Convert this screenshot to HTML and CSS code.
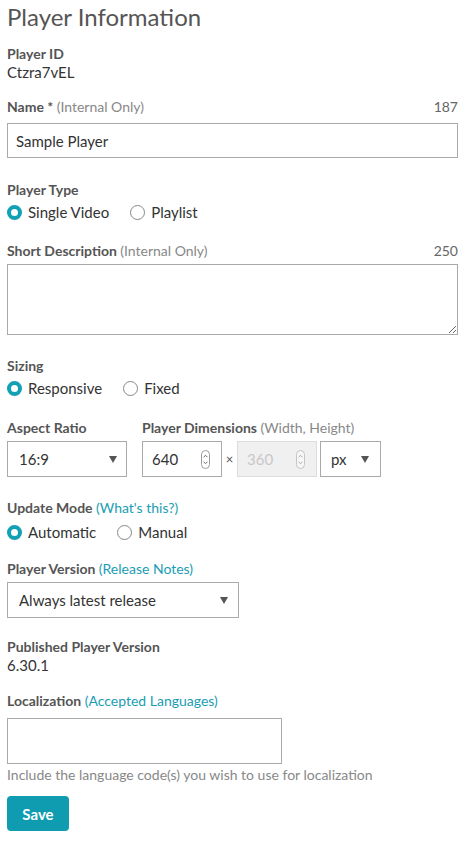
FILE: index.html
```html
<!DOCTYPE html>
<html lang="en">
<head>
<meta charset="utf-8">
<title>Player Information</title>
<link rel="stylesheet" href="styles.css">
</head>
<body>
<div class="page">
  <h1 class="title">Player Information</h1>

  <div class="field f-id">
    <div class="label">Player ID</div>
    <div class="value">Ctzra7vEL</div>
  </div>

  <div class="field f-name">
    <div class="label-row">
      <span class="label">Name <span class="star">*</span> <span class="note">(Internal Only)</span></span>
      <span class="count">187</span>
    </div>
    <input class="text-input name-input" type="text" value="Sample Player">
  </div>

  <div class="field f-type">
    <div class="label">Player Type</div>
    <div class="radios">
      <span class="radio-item"><span class="radio checked"></span>Single Video</span>
      <span class="radio-item"><span class="radio"></span>Playlist</span>
    </div>
  </div>

  <div class="field f-desc">
    <div class="label-row">
      <span class="label">Short Description <span class="note">(Internal Only)</span></span>
      <span class="count">250</span>
    </div>
    <textarea class="textarea"></textarea>
  </div>

  <div class="field f-sizing">
    <div class="label">Sizing</div>
    <div class="radios">
      <span class="radio-item"><span class="radio checked"></span>Responsive</span>
      <span class="radio-item"><span class="radio"></span>Fixed</span>
    </div>
  </div>

  <div class="field f-dims">
    <div class="dim-col">
      <div class="label">Aspect Ratio</div>
      <div class="select aspect-select">
        <span>16:9</span>
        <svg class="caret" width="8" height="8" viewBox="0 0 8 8"><path d="M0 1h8L4 8z" fill="#555"/></svg>
      </div>
    </div>
    <div class="dim-col">
      <div class="label">Player Dimensions <span class="note">(Width, Height)</span></div>
      <div class="dim-row">
        <div class="num-box">
          <span>640</span>
          <svg class="spin" width="9" height="19" viewBox="0 0 9 19"><rect x="0.5" y="0.5" width="8" height="18" rx="4" fill="#fff" stroke="#9a9a9a"/><path d="M2.6 7.2 4.5 5.3 6.4 7.2M2.6 11.8 4.5 13.7 6.4 11.8" fill="none" stroke="#666" stroke-width="1"/></svg>
        </div>
        <span class="times">×</span>
        <div class="num-box disabled">
          <span>360</span>
          <svg class="spin" width="9" height="19" viewBox="0 0 9 19"><rect x="0.5" y="0.5" width="8" height="18" rx="4" fill="#f7f7f7" stroke="#c4c4c4"/><path d="M2.6 7.2 4.5 5.3 6.4 7.2M2.6 11.8 4.5 13.7 6.4 11.8" fill="none" stroke="#aaa" stroke-width="1"/></svg>
        </div>
        <div class="select unit-select">
          <span>px</span>
          <svg class="caret" width="8" height="8" viewBox="0 0 8 8"><path d="M0 1h8L4 8z" fill="#555"/></svg>
        </div>
      </div>
    </div>
  </div>

  <div class="field f-update">
    <div class="label">Update Mode <span class="link">(What's this?)</span></div>
    <div class="radios">
      <span class="radio-item"><span class="radio checked"></span>Automatic</span>
      <span class="radio-item"><span class="radio"></span>Manual</span>
    </div>
  </div>

  <div class="field f-version">
    <div class="label">Player Version <span class="link">(Release Notes)</span></div>
    <div class="select version-select">
      <span>Always latest release</span>
      <svg class="caret" width="8" height="8" viewBox="0 0 8 8"><path d="M0 1h8L4 8z" fill="#555"/></svg>
    </div>
  </div>

  <div class="field f-published">
    <div class="label">Published Player Version</div>
    <div class="value">6.30.1</div>
  </div>

  <div class="field f-local">
    <div class="label">Localization <span class="link">(Accepted Languages)</span></div>
    <input class="text-input local-input" type="text" value="">
    <div class="help">Include the language code(s) you wish to use for localization</div>
  </div>

  <button class="save" type="button">Save</button>
</div>
</body>
</html>
```

FILE: styles.css
```css
* { box-sizing: border-box; }

body {
  margin: 0;
  background: #fff;
  font-family: Lato, "Open Sans", sans-serif;
  color: #555;
  font-size: 14px;
}

.page {
  padding: 2px 9px 0 7px;
}

.title {
  margin: 0;
  font-size: 24px;
  font-weight: 400;
  line-height: 30px;
  color: #555;
}

.label {
  font-weight: 700;
  font-size: 14px;
  line-height: 19px;
  color: #555;
}

.note {
  font-weight: 400;
  color: #888;
  font-size: 14px;
}

.star { font-weight: 700; }

.link {
  font-weight: 400;
  color: #1a9db3;
  font-size: 14px;
}

.value {
  font-size: 15px;
  line-height: 19px;
  color: #333;
}

.label-row {
  display: flex;
  justify-content: space-between;
  align-items: baseline;
}

.count {
  font-size: 14px;
  color: #666;
  line-height: 19px;
}

.text-input {
  display: block;
  border: 1px solid #aaa;
  border-radius: 0;
  font-family: Lato, sans-serif;
  font-size: 15px;
  color: #333;
  padding: 0 8px;
  outline: none;
  background: #fff;
}

.name-input {
  width: 100%;
  height: 35px;
  margin-top: 7px;
}

.textarea {
  display: block;
  width: 100%;
  height: 71px;
  margin-top: 4px;
  border: 1px solid #aaa;
  border-radius: 0;
  font-family: Lato, sans-serif;
  resize: vertical;
  outline: none;
}

.radios {
  display: flex;
  align-items: center;
  height: 20px;
  font-size: 15px;
  color: #333;
}

.radio-item {
  display: flex;
  align-items: center;
  margin-right: 21px;
}

.radio {
  width: 15px;
  height: 15px;
  border-radius: 50%;
  border: 1px solid #888;
  background: #fff;
  margin-right: 6px;
  flex: none;
}

.radio.checked {
  border: 4.5px solid #13a0b5;
  background: #fff;
}

.f-id { margin-top: 12px; }
.f-name { margin-top: 15px; }
.f-type { margin-top: 22px; }
.f-type .radios { margin-top: 3px; }
.f-desc { margin-top: 19px; }
.f-sizing { margin-top: 21px; }
.f-sizing .radios { margin-top: 3px; }
.f-dims { margin-top: 20px; display: flex; gap: 15px; }
.f-update { margin-top: 21px; }
.f-update .radios { margin-top: 5px; }
.f-version { margin-top: 17px; }
.f-published { margin-top: 19px; }
.f-local { margin-top: 16px; }

.select {
  display: flex;
  align-items: center;
  justify-content: space-between;
  border: 1px solid #aaa;
  background: #fff;
  height: 36px;
  font-size: 15px;
  color: #333;
}

.aspect-select {
  width: 120px;
  margin-top: 4px;
  padding: 0 9px 0 11px;
}

.dim-row {
  display: flex;
  align-items: center;
  margin-top: 4px;
}

.num-box {
  display: flex;
  align-items: center;
  justify-content: space-between;
  width: 80px;
  height: 36px;
  border: 1px solid #aaa;
  background: #fff;
  padding: 0 11px 0 9px;
  font-size: 15px;
  color: #333;
}

.num-box.disabled {
  background: #f0f0f0;
  border-color: #ddd;
  color: #c8c8c8;
}

.times {
  width: 15px;
  text-align: center;
  font-size: 13px;
  color: #555;
}

.unit-select {
  width: 61px;
  margin-left: 3px;
  padding: 0 11px 0 10px;
}

.version-select {
  width: 232px;
  height: 36px;
  margin-top: 4px;
  padding: 0 10px 0 11px;
}

.local-input {
  width: 275px;
  height: 46px;
  margin-top: 8px;
}

.help {
  margin-top: 3px;
  font-size: 14px;
  line-height: 16px;
  color: #888;
}

.save {
  display: block;
  margin-top: 13px;
  width: 62px;
  height: 35px;
  border: none;
  border-radius: 4px;
  background: #0f9bb0;
  color: #fff;
  font-family: Lato, sans-serif;
  font-weight: 700;
  font-size: 15px;
  padding: 0;
}
```
